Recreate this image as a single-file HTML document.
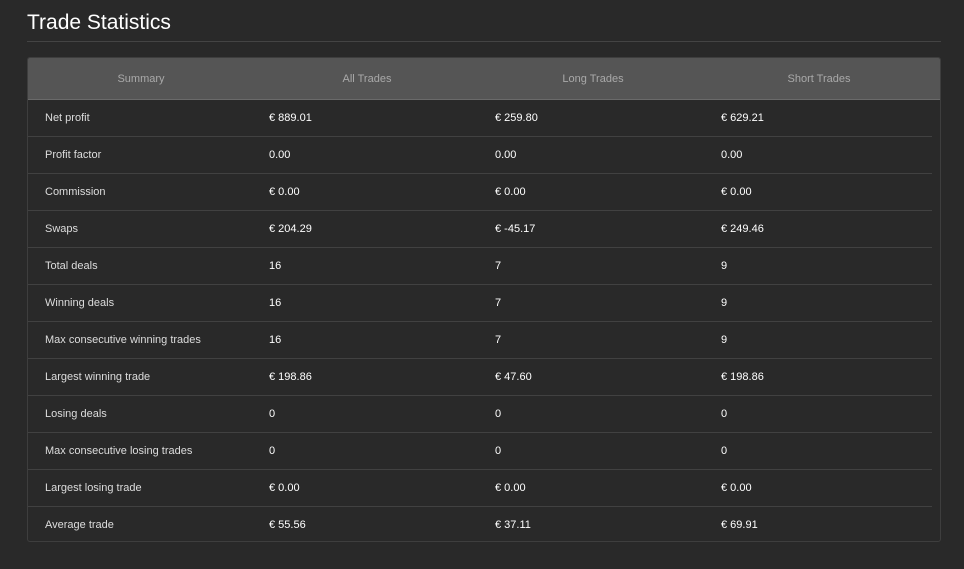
<!DOCTYPE html>
<html><head><style>
body{margin:0;background:#292929;width:964px;height:569px;overflow:hidden;font-family:"Liberation Sans",sans-serif;}
h1{position:absolute;left:27px;top:11px;margin:0;font-size:21px;font-weight:normal;color:#fff;}
.hr{position:absolute;left:27px;top:41px;width:914px;height:1px;background:#444;}
.box{position:absolute;left:27px;top:57px;width:912px;height:483px;border:1px solid #3e3e3e;border-radius:3px;overflow:hidden;}
.head{height:41px;background:#555;border-bottom:1px solid #6a6a6a;display:flex;}
.head div{width:226px;text-align:center;line-height:42px;font-size:11px;color:#a9a9a9;}
.row{height:36px;border-bottom:1px solid #414141;margin-right:8px;display:flex;font-size:11px;color:#fff;line-height:36px;}
.row:last-child{border-bottom:none;height:34px;}
.row div{width:211px;padding-left:15px;}
.row div:first-child{padding-left:17px;width:209px;color:#ddd;}
</style></head><body>
<h1>Trade Statistics</h1><div class="hr"></div>
<div class="box">
<div class="head"><div>Summary</div><div>All Trades</div><div>Long Trades</div><div>Short Trades</div></div>
<div class="row"><div>Net profit</div><div>€ 889.01</div><div>€ 259.80</div><div>€ 629.21</div></div>
<div class="row"><div>Profit factor</div><div>0.00</div><div>0.00</div><div>0.00</div></div>
<div class="row"><div>Commission</div><div>€ 0.00</div><div>€ 0.00</div><div>€ 0.00</div></div>
<div class="row"><div>Swaps</div><div>€ 204.29</div><div>€ -45.17</div><div>€ 249.46</div></div>
<div class="row"><div>Total deals</div><div>16</div><div>7</div><div>9</div></div>
<div class="row"><div>Winning deals</div><div>16</div><div>7</div><div>9</div></div>
<div class="row"><div>Max consecutive winning trades</div><div>16</div><div>7</div><div>9</div></div>
<div class="row"><div>Largest winning trade</div><div>€ 198.86</div><div>€ 47.60</div><div>€ 198.86</div></div>
<div class="row"><div>Losing deals</div><div>0</div><div>0</div><div>0</div></div>
<div class="row"><div>Max consecutive losing trades</div><div>0</div><div>0</div><div>0</div></div>
<div class="row"><div>Largest losing trade</div><div>€ 0.00</div><div>€ 0.00</div><div>€ 0.00</div></div>
<div class="row"><div>Average trade</div><div>€ 55.56</div><div>€ 37.11</div><div>€ 69.91</div></div>
</div>
</body></html>
